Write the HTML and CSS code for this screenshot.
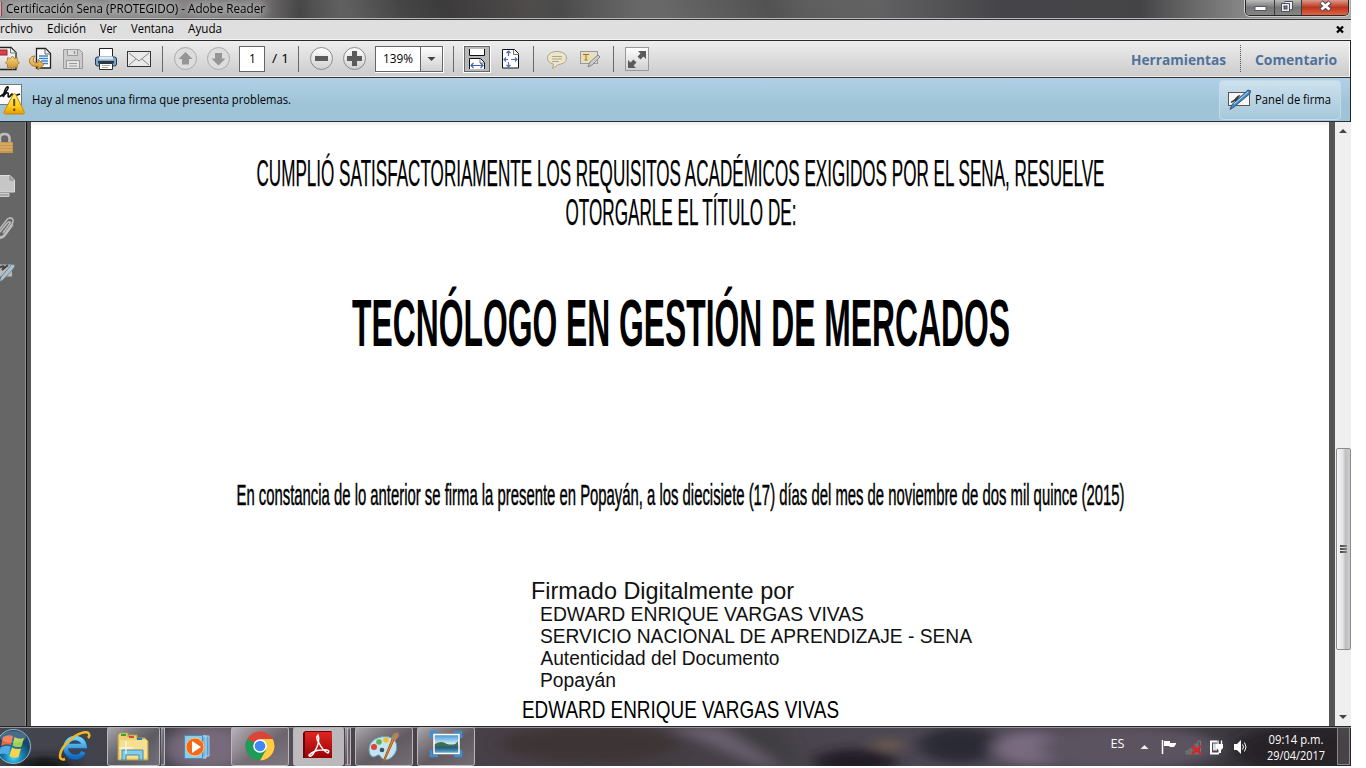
FILE: index.html
```
<!DOCTYPE html>
<html lang="es">
<head>
<meta charset="utf-8">
<title>Certificación Sena (PROTEGIDO) - Adobe Reader</title>
<link rel="stylesheet" href="styles.css">
</head>
<body>
<div class="screen">
  <header class="titlebar">
    <span class="app-edge"></span>
    <svg class="window-title" width="320" height="18"><text x="0" y="13" textLength="259" lengthAdjust="spacingAndGlyphs">Certificación Sena (PROTEGIDO) - Adobe Reader</text></svg>
    <div class="window-buttons">
      <span class="wbtn min"><svg width="28" height="15"><rect x="9" y="6.500" width="11" height="4" fill="#fff" stroke="#555865"/></svg></span>
      <span class="wbtn restore"><svg width="26" height="15"><path d="M9.500 1.500h8v8h-2M6.500 3.500h8v8h-8z" fill="#eee" stroke="#4b4e5c"/><rect x="9" y="6" width="3" height="3" fill="#777" stroke="#4b4e5c"/></svg></span>
      <span class="wbtn close"><svg width="47" height="15"><path d="M19 2l9 8M28 2l-9 8" stroke="#544a55" stroke-width="5"/><path d="M19.500 2.500l8 7M27.500 2.500l-8 7" stroke="#fff" stroke-width="2.800"/></svg></span>
    </div>
  </header>

  <nav class="menubar">
    <svg class="ui" width="1320" height="20">
      <text x="0" y="13" textLength="33" lengthAdjust="spacingAndGlyphs">rchivo</text>
      <text x="47" y="13" textLength="39" lengthAdjust="spacingAndGlyphs">Edición</text>
      <text x="100" y="13" textLength="17" lengthAdjust="spacingAndGlyphs">Ver</text>
      <text x="131" y="13" textLength="43" lengthAdjust="spacingAndGlyphs">Ventana</text>
      <text x="188" y="13" textLength="34" lengthAdjust="spacingAndGlyphs">Ayuda</text>
    </svg>
    <svg class="doc-close" width="9" height="9"><path d="M1 1.500l6 6M7 1.500l-6 6" stroke="#000" stroke-width="2.300"/></svg>
  </nav>

  <div class="toolbar">
    <svg width="660" height="36" viewBox="0 41 660 36">
      <defs>
        <linearGradient id="gold" x2="0" y2="1"><stop stop-color="#f8d984"/><stop offset="1" stop-color="#c98f2a"/></linearGradient>
        <linearGradient id="silver" x2="0" y2="1"><stop stop-color="#fff"/><stop offset="1" stop-color="#cfcfcf"/></linearGradient>
      </defs>
      <g>
        <path d="M-3 47.500H11l5 5V69.500H-3" fill="url(#silver)" stroke="#222" stroke-width="1.300"/>
        <path d="M10.500 48v5H16" fill="#eee" stroke="#777"/>
        <rect x="-2" y="50" width="9" height="5" fill="#d9424c" stroke="#9e1f28"/>
        <path d="M12.500 56l1.800 2.500 3-.8v3l2.200 2-2.200 2v3l-3-.7-1.800 2.500-2-2.500-3 .7v-3l-2-2 2-2v-3l3 .8z" fill="url(#gold)" stroke="#a97421" stroke-width=".8"/>
      </g>
      <g>
        <path d="M36.500 48.500h9l5 5v14.500h-14z" fill="#fff" stroke="#222" stroke-width="1.300"/>
        <path d="M45 49v5h5" fill="#eee" stroke="#666"/>
        <path d="M39 56h9M39 58.500h9M41 61h7M43 63.500h5" stroke="#3a83c9" stroke-width="1.500"/>
        <path d="M35 56c-5 0-7 5-4.500 8 2 2.500 5 2.500 7.500 2.500v3.500l6-5.500-6-5v3c-4 1-6.500-2-3-6.500z" fill="url(#gold)" stroke="#a97421"/>
      </g>
      <g fill="#ccc" stroke="#999">
        <path d="M63.500 49.500h16l3 3v16h-19z"/><path d="M67.500 49.500h10v6h-10z" fill="#ddd"/><path d="M74.500 51v3" stroke-width="1.500"/><path d="M66.500 60.500h13v8h-13z" fill="#e4e4e4"/><path d="M69 63.500h8M69 66h8"/>
      </g>
      <g>
        <path d="M99.500 48.500h13v10h-13z" fill="#fff" stroke="#222"/>
        <rect x="95.500" y="57" width="21" height="9" rx="2" fill="#80a6c8" stroke="#26384d"/>
        <path d="M99 56.500h14v3H99z" fill="#dce8f3"/><rect x="98" y="61" width="16" height="2.500" fill="#293948"/>
        <path d="M99.500 63.500h13v6h-13z" fill="#fff" stroke="#333"/><path d="M102 65.500h8M102 67.500h6" stroke="#aaa"/>
      </g>
      <g fill="#eaeaea" stroke="#333"><rect x="127.500" y="51.500" width="23" height="15"/><path d="M129 53l10 8 10-8M129 65l7-6M149 65l-7-6" fill="none" stroke="#888"/></g>
      <g class="seps"><path d="M162.500 46v26M298.500 46v26M453.500 46v26M533.500 46v26M613.500 46v26"/></g>
      <g fill="#ddd" stroke="#aaa"><circle cx="185.500" cy="58.500" r="11"/><circle cx="218.500" cy="58.500" r="11"/></g>
      <path d="M185.500 52l7 7h-3.500v5.500h-7V59h-3.500zM218.500 65.500l-7-7h3.500V53h7v5.500h3.500z" fill="#969696"/>
      <rect x="239.500" y="46.500" width="25" height="25" fill="#fff" stroke="#666"/>
      <g class="ui"><text x="249" y="63">1</text><text x="272" y="63" textLength="17" lengthAdjust="spacingAndGlyphs">/ 1</text></g>
      <g fill="url(#silver)" stroke="#8b8b8b"><circle cx="321.500" cy="58.500" r="11"/><circle cx="354.500" cy="58.500" r="11"/></g>
      <path d="M315 56h13v5h-13zM347 56h5v-5h5v5h5v5h-5v5h-5v-5h-5z" fill="#5b5b5b"/>
      <rect x="375" y="46" width="69" height="27" fill="#fff"/><rect x="375.500" y="46.500" width="67" height="25" fill="#fff" stroke="#666"/>
      <rect x="420.500" y="46.500" width="22" height="25" fill="url(#silver)" stroke="#666"/><path d="M427.500 57h8l-4 4z" fill="#444"/>
      <g class="ui"><text x="383" y="63" textLength="30" lengthAdjust="spacingAndGlyphs">139%</text></g>
      <rect x="463" y="45" width="28" height="28" fill="#fff"/><rect x="464.500" y="46.500" width="25" height="25" fill="#b9b9b9" stroke="#666"/>
      <path d="M469.500 49v6.500h15V49" fill="#fff" stroke="#111"/><path d="M469.500 69V58.500h11l4 4V69" fill="#fff" stroke="#111"/><path d="M480 59v4h4" fill="none" stroke="#777"/>
      <path d="M471 65.500h12M473.500 63l-2.500 2.500 2.500 2.500M480.500 63l2.500 2.500-2.500 2.500" fill="none" stroke="#3e62b3" stroke-width="1.200"/>
      <path d="M502.500 49.500h12l4 4v14.500h-16z" fill="#fff" stroke="#111"/><path d="M513.500 50v4.500h5" fill="#eee" stroke="#777"/>
      <path d="M508.500 51v5M508.500 62v5M504 59.500h4M511 59.500h6M506.500 53l2-2 2 2M506.500 65l2 2 2-2M506 57.500l-2 2 2 2M515 57.500l2 2-2 2" fill="none" stroke="#4e70bb" stroke-width="1.200"/>
      <path d="M557 51.500c6 0 9.500 3 9.500 6.500s-3 6-8 6.500l-6 4 1-4.500c-4-1-6-3-6-6 0-4 4-6.500 9.500-6.500z" fill="#eee4c7" stroke="#aaa593"/><path d="M552 56.500h10M552 59h10M552 61.500h7" stroke="#aaa593"/>
      <rect x="580.500" y="51.500" width="17" height="12" fill="#e5dfc8" stroke="#999"/><path d="M582 53h8v8h-8z" fill="#f2df92"/><path d="M583 54.500h6M586 54.500V60M584.500 60h3" stroke="#777"/><path d="M588 67l2-5 8-7 2 2-8 8z" fill="#ccc" stroke="#888"/>
      <rect x="625.500" y="47.500" width="23" height="23" fill="url(#silver)" stroke="#999"/><path d="M638 51h8v8l-2.500-2.500-3 3-3-3 3-3zM628 60l2.500 2.500 3-3 3 3-3 3L636 68h-8z" fill="#5b5b5b"/>
    </svg>
    <div class="side-tabs">
      <svg width="95" height="36" class="tab"><text x="0" y="24" textLength="95" lengthAdjust="spacingAndGlyphs">Herramientas</text></svg>
      <span class="dots"></span>
      <svg width="82" height="36" class="tab"><text x="0" y="24" textLength="82" lengthAdjust="spacingAndGlyphs">Comentario</text></svg>
    </div>
  </div>

  <div class="message">
    <svg class="ui" width="400" height="42" viewBox="0 78 400 42">
      <defs><linearGradient id="warn" x2="0" y2="1"><stop stop-color="#fff184"/><stop offset=".6" stop-color="#ffd21d"/><stop offset="1" stop-color="#e59a00"/></linearGradient></defs>
      <rect x="-3" y="84.500" width="24.500" height="20" fill="#fff" stroke="#777"/>
      <path d="M0 96.500c5-3 9-8 8-9.500-2-1-4 5-5 10 2-3 4-5 5-4 1 1-1 4 1 4 2-1 2-3 3-3 1 3 3 2 8 0" fill="none" stroke="#111" stroke-width="1.600"/>
      <path d="M13.500 94q1-1 2 0l9 18.500q0 1.500-2 1.500H5.500q-2 0-1.500-2z" fill="url(#warn)" stroke="#c88908"/><path d="M14.200 99v7M14.200 108.500v2.500" stroke="#6c4b00" stroke-width="2"/>
      <text x="32" y="104" textLength="259" lengthAdjust="spacingAndGlyphs">Hay al menos una firma que presenta problemas.</text>
    </svg>
    <div class="panel-btn">
      <svg width="24" height="24"><rect x=".5" y="4.500" width="21" height="13" fill="#f7f7f7" stroke="#555"/><path d="M3 14c4 0 6-6 8-6l-4 5" fill="none" stroke="#333" stroke-width="1.500"/><path d="M2 21.500l2-5L20 2l3 1-1.500 3L6 19z" fill="#438bc5" stroke="#345878"/><path d="M6 16L20 4" stroke="#b8dcf4"/></svg>
      <svg class="ui" width="77" height="24"><text x="0" y="16" textLength="76" lengthAdjust="spacingAndGlyphs">Panel de firma</text></svg>
    </div>
  </div>

  <main class="workspace">
    <aside class="rail">
      <svg width="25" height="180" viewBox="0 122 25 180">
        <path d="M0 142v-4q0-4 4.500-4t5 4v5" fill="none" stroke="#bdbdbd" stroke-width="2.500"/><rect x="-2" y="142" width="15" height="11" fill="#c6964d"/><path d="M0 144h12M0 147h12M0 150h12" stroke="#e0bd7c"/>
        <path d="M-1 193.500h10v3H-1z" fill="#aaa" stroke="#ccc"/><path d="M-1 175.500H10l4.500 4.500v12H-1z" fill="#c6c6c6" stroke="#ddd"/><path d="M10 176v4h4" fill="#aaa" stroke="#888"/>
        <path d="M-1 230L7 219.500q3-3 5.500-.5 1.500 2-.5 5l-8 11q-3 3-5 1M-1 238.500q4 0 6-3l8-11M0 232l7-9q2-2 3.500-.5L3 233" fill="none" stroke="#bcbcbc" stroke-width="1.500"/>
        <path d="M-1 264.500H12v12H-1z" fill="#bbb"/><path d="M-1 268c5-3 6-2 3 2l6-5" fill="none" stroke="#444" stroke-width="2"/><path d="M-1 282l2-5L12 264l3 1-1 3L3 280z" fill="#abc0cf" stroke="#60717d" stroke-width=".8"/>
      </svg>
    </aside>
    <article class="page">
      <svg width="1298" height="130"><g class="regular"><text x="225.500" y="64" textLength="848" lengthAdjust="spacingAndGlyphs">CUMPLIÓ SATISFACTORIAMENTE LOS REQUISITOS ACADÉMICOS EXIGIDOS POR EL SENA, RESUELVE</text><text x="534.500" y="103" textLength="231" lengthAdjust="spacingAndGlyphs">OTORGARLE EL TÍTULO DE:</text></g></svg>
      <svg width="1298" height="150"><text class="degree" x="321" y="94" textLength="658" lengthAdjust="spacingAndGlyphs">TECNÓLOGO EN GESTIÓN DE MERCADOS</text></svg>
      <svg width="1298" height="150"><text class="record" x="205.500" y="103" textLength="888" lengthAdjust="spacingAndGlyphs">En constancia de lo anterior se firma la presente en Popayán, a los diecisiete (17) días del mes de noviembre de dos mil quince (2015)</text></svg>
      <svg width="1298" height="174">
        <text class="sign-lg" x="500" y="47" textLength="263" lengthAdjust="spacingAndGlyphs">Firmado Digitalmente por</text>
        <g class="sign"><text x="509" y="69" textLength="324" lengthAdjust="spacingAndGlyphs">EDWARD ENRIQUE VARGAS VIVAS</text><text x="509" y="91" textLength="432" lengthAdjust="spacingAndGlyphs">SERVICIO NACIONAL DE APRENDIZAJE - SENA</text><text x="509.500" y="113" textLength="239" lengthAdjust="spacingAndGlyphs">Autenticidad del Documento</text><text x="509" y="135" textLength="76" lengthAdjust="spacingAndGlyphs">Popayán</text></g>
        <text class="sign-lg dark" x="491" y="166" textLength="317" lengthAdjust="spacingAndGlyphs">EDWARD ENRIQUE VARGAS VIVAS</text>
      </svg>
    </article>
    <div class="scrollbar">
      <svg width="16" height="16"><path d="M4 11l4-4 4 4z" fill="#444"/></svg>
      <div class="thumb"><i></i><i></i><i></i></div>
      <svg width="16" height="16"><path d="M4 5h8l-4 4z" fill="#444"/></svg>
    </div>
  </main>

  <footer class="taskbar">
    <svg width="1351" height="40" viewBox="0 726 1351 40">
      <defs>
        <radialGradient id="orb" cy=".8"><stop stop-color="#4fe0ff"/><stop offset=".5" stop-color="#1784b5"/><stop offset="1" stop-color="#1c4668"/></radialGradient>
        <linearGradient id="btn" x2="1" y2="1"><stop stop-color="#fff" stop-opacity=".55"/><stop offset=".55" stop-color="#aaa" stop-opacity=".25"/><stop offset="1" stop-color="#ddd" stop-opacity=".3"/></linearGradient>
        <linearGradient id="red" x2="0" y2="1"><stop stop-color="#e12520"/><stop offset="1" stop-color="#990306"/></linearGradient>
        <linearGradient id="sky" x2="0" y2="1"><stop stop-color="#3c93d5"/><stop offset=".5" stop-color="#d5edf8"/><stop offset=".55" stop-color="#3f7150"/><stop offset=".7" stop-color="#235d7e"/><stop offset="1" stop-color="#71bad8"/></linearGradient>
        <linearGradient id="ieb" x2="0" y2="1"><stop stop-color="#76d3fa"/><stop offset="1" stop-color="#136ac0"/></linearGradient>
        <filter id="soft" x="-50%" y="-50%" width="200%" height="200%"><feGaussianBlur stdDeviation="9 5"/></filter>
      </defs>
      <g filter="url(#soft)">
        <ellipse cx="45" cy="766" rx="28" ry="10" fill="#181719"/><ellipse cx="205" cy="748" rx="40" ry="20" fill="#776b7c"/>
        <ellipse cx="590" cy="744" rx="90" ry="18" fill="#3d3436"/><path d="M665 726l60 0 80 40h-45z" fill="#675f6d"/><path d="M720 726h60l20 40h-20z" fill="#403c42"/><ellipse cx="855" cy="762" rx="42" ry="13" fill="#211f26"/><ellipse cx="888" cy="745" rx="12" ry="5" fill="#7b604f"/>
        <ellipse cx="960" cy="745" rx="42" ry="18" fill="#2c2a34"/><ellipse cx="1030" cy="748" rx="37" ry="16" fill="#796b80"/><ellipse cx="1130" cy="748" rx="90" ry="20" fill="#5c5260"/><ellipse cx="1300" cy="750" rx="65" ry="24" fill="#252428"/>
      </g>
      <path d="M0 726.500h1351" stroke="#24272a"/><path d="M0 727.500h1351" stroke="#92949a"/>
      <circle cx="13.500" cy="746.500" r="17" fill="url(#orb)" stroke="#8fb9ce"/>
      <path d="M3 737q5-3 10-1l-2 9q-5-2-10 1z" fill="#ed653b"/><path d="M14.500 737q5 3 9.500 1l-2.500 8.500q-5 1.500-9-1z" fill="#a2ce4d"/><path d="M.5 747.500q5-3 10-1l-2 8.500q-5-3-10 0z" fill="#51a9e6"/><path d="M12 747.500q4 2.500 9 1l-2.500 8.500q-5 1.500-9-1z" fill="#ffd348"/>
      <ellipse cx="13" cy="737" rx="13" ry="6" fill="#fff" opacity=".2"/>
      <path d="M83.500 752a9.500 9.500 0 1 1 1-6H67" fill="none" stroke="#154f8c" stroke-width="6"/><path d="M83.500 752a9.500 9.500 0 1 1 1-6H67" fill="none" stroke="url(#ieb)" stroke-width="4.500"/>
      <path d="M65 759c-8 3-6-9 3-17 8-9 20-12 21-8 1 2-1 4-1 4" fill="none" stroke="#efb923" stroke-width="2.500"/>
      <g fill="url(#btn)" stroke="#b9b7bd"><rect x="107.500" y="727.500" width="52" height="38" rx="2"/><path d="M161 728h3.500v37H161" /><rect x="231.500" y="727.500" width="57" height="38" rx="2"/><rect x="293.500" y="727.500" width="50" height="38" rx="2" fill="#fff" fill-opacity=".62"/><path d="M345 728h2.500v37H345M348 728h2.500v37H348" /><rect x="355.500" y="727.500" width="57" height="38" rx="2"/><rect x="417.500" y="727.500" width="57" height="38" rx="2"/></g>
      <path d="M118 735l2-2h8v4l1-2h8v4l1-1h7l3 3v19h-30z" fill="#eed174" stroke="#b69745"/><path d="M121 734h5v2h-5z" fill="#2ca53b"/><path d="M129 736h5v2h-5z" fill="#d64b32"/><path d="M137 738h5v2h-5z" fill="#287dbd"/><path d="M120 740h27v18h-27z" fill="#f5df91"/><path d="M122 760v-10h21v10h-4v-5h-13v5z" fill="#83cdea" stroke="#4689ad"/><path d="M126 741v13M119 748h14" stroke="#fff"/>
      <path d="M190 736h19v20h-19z" fill="#5e9fc9" stroke="#a1d0e9"/><path d="M187 736h19v22h-19z" fill="#75b7dc" stroke="#b7ddef"/><path d="M184.500 735.500h18v23h-18z" fill="#8dcceb" stroke="#468bb7"/><circle cx="195" cy="747" r="9" fill="#f16a19" stroke="#ffc289"/><path d="M192 741l9 6-9 6z" fill="#fff"/>
      <g><circle cx="260" cy="746" r="14.500" fill="#db4437"/><path d="M260 746L247.500 738.700A14.500 14.500 0 0 0 260 760.500l6.500-11z" fill="#1b9d59"/><path d="M260 739h12.700A14.500 14.500 0 0 1 260 760.500l6.300-11z" fill="#ffcd41"/><circle cx="260" cy="746" r="6.800" fill="#fff"/><circle cx="260" cy="746" r="5.300" fill="#4285f4"/></g>
      <path d="M303 733l2-2h26l1 1v26H303z" fill="#690406"/><path d="M305 732h27v26h-27z" fill="url(#red)"/><path d="M318 735c-2 2-2 4 1 8 3 6 6 9 9 10 2-2 0-4-6-3-5 0-10 2-13 5 0 2 3 2 6-4 3-5 5-12 3-16z" fill="none" stroke="#fff" stroke-width="1.500"/>
      <path d="M369 749c0-8 9-14 20-12 9 2 10 13 4 19-5 5-10 5-13 0-1-3-4 1-7 1-3-1-4-4-4-8z" fill="#c5e4f1" stroke="#629dbb"/><circle cx="374" cy="747" r="3" fill="#df4139"/><circle cx="379" cy="742" r="2.800" fill="#61b24b"/><circle cx="386" cy="740" r="2.800" fill="#f0bd30"/><circle cx="382" cy="750" r="2.300" fill="#345269"/><path d="M384 759q-2 3 0 3l10-22-2-1z" fill="#e88c27" stroke="#a85a14"/><path d="M391 739l2-5 5-2 1 4-4 5z" fill="#ad8558"/>
      <path d="M431 738v-6h7M454 732h7v6M431 750v6h7M454 756h7v-6" fill="none" stroke="#3a8fd5" stroke-width="2.500"/><path d="M434 734.500h25v19h-25z" fill="url(#sky)" stroke="#fff" stroke-width="1.500"/><path d="M435 744q6-4 12 0t11-3v5h-23z" fill="#3e6f50"/>
      <g class="tray"><text x="1110.500" y="748" textLength="14" lengthAdjust="spacingAndGlyphs">ES</text><text x="1268.500" y="743.500" textLength="55" lengthAdjust="spacingAndGlyphs">09:14 p.m.</text><text x="1267" y="760" textLength="58" lengthAdjust="spacingAndGlyphs">29/04/2017</text></g>
      <path d="M1140.500 749h8l-4-4z" fill="#eee"/>
      <path d="M1162.500 740v14" stroke="#fff" stroke-width="1.500"/><path d="M1164 741h6v2h6v1l-2 3h-4l-1-1h-5z" fill="#fff"/>
      <path d="M1186 751h2v3h-2zM1189 749h2v5h-2zM1192 747h2v7h-2zM1195 744h2v10h-2zM1198 741h2.500v13h-2.500z" fill="#555" stroke="#888" stroke-width=".7"/><path d="M1192 746l9 8M1201 746l-9 8" stroke="#f01818" stroke-width="2"/>
      <path d="M1217 741.500h-6v12h8" fill="none" stroke="#fff" stroke-width="2"/><path d="M1213 743.500h4v7h-4z" fill="#ddd"/><path d="M1216 744h7v4l-2 2v3h-2.500v-3l-2.500-2z" fill="#fff"/><path d="M1218 740.500v4M1221.500 740.500v4" stroke="#fff" stroke-width="1.300"/>
      <path d="M1234 744h3l4-4v14l-4-4h-3z" fill="#fff"/><path d="M1242.500 744.500q2 2.500 0 5M1244.500 742.500q3 4.500 0 9" fill="none" stroke="#fff"/>
      <rect x="1337.500" y="727.500" width="12" height="37" fill="#fff" fill-opacity=".15" stroke="#888"/>
    </svg>
  </footer>
</div>
</body>
</html>
```
FILE: styles.css
```
* { box-sizing: border-box; }
body { margin: 0; width: 1366px; height: 768px; background: #fff; overflow: hidden; font-family: "Open Sans", "Noto Sans", sans-serif; }
svg { display: block; }
.screen { width: 1351px; height: 766px; display: grid; grid-template-rows: 20px 21px 37px 44px 604px 40px; }
.ui { overflow: visible; }
.ui text { font: 12px "Open Sans", "Noto Sans", sans-serif; fill: #000; }

.titlebar { display: flex; background: linear-gradient(65deg, transparent 22%, #6668 26%, #3338 33%, transparent 40%, #6666 49%, #2226 57%, transparent 65%), linear-gradient(90deg, #8d8b8b 0, #757373 260px, #464545 300px, #5a5a5a 340px, #434141 400px, #514d4d 530px, #484848 560px, #686868 640px, #747474 800px, #454549 1000px, #444447 1140px, #606060 1180px, #858585 1240px, #a9a9a9 1351px); border-bottom: 1px solid #34343a; box-shadow: inset 0 -1px #b8b8b8; }
.app-edge { width: 2px; height: 14px; margin-top: 2px; border-right: 1px solid #8e3b42; background: #caa; }
.window-title { margin-left: 4px; overflow: visible; filter: drop-shadow(0 0 5px #ddd) drop-shadow(0 0 4px #ccc); }
.window-title text { font: 12px "Open Sans", "Noto Sans", sans-serif; fill: #000; }
.window-buttons { display: flex; width: 104px; height: 16px; margin: 0 2px 0 auto; border: 1px solid #282828; border-top: 0; border-radius: 0 0 5px 5px; box-shadow: 0 0 0 1px #ccc; overflow: hidden; }
.wbtn { border-right: 1px solid #3b3b3b; background: linear-gradient(#bbb, #777 50%, #858585); }
.min { width: 29px; }
.restore { width: 27px; }
.close { width: 47px; border: 0; background: linear-gradient(#d99a8b, #bd351d 50%, #dc6545); }

.menubar { display: flex; justify-content: space-between; background: #dfdfdf; border-bottom: 1px solid #29292d; box-shadow: inset 0 -1px #f5f5f5; }
.doc-close { margin: 5px 6px 0 0; }

.toolbar { display: flex; justify-content: space-between; background: linear-gradient(#eee, #cacaca); border-bottom: 1px solid #333; border-right: 1px solid #222; box-shadow: inset 0 -1px #eee, inset -1px 0 #fff; }
.seps { stroke: #686868; }
.side-tabs { display: flex; margin-right: 13px; }
.tab { overflow: visible; }
.tab text { font: 700 14px "Open Sans", "Noto Sans", sans-serif; fill: #4e729b; }
.dots { width: 1px; height: 27px; margin: 4px 14px 0; background: repeating-linear-gradient(#555 0 1px, transparent 1px 2px); }

.message { display: flex; justify-content: space-between; background: linear-gradient(#b2d0e7, #9fc4d8 60%, #9fc4d7); border-bottom: 1px solid #283038; border-right: 1px solid #222; }
.panel-btn { display: flex; align-items: center; gap: 4px; width: 122px; height: 40px; margin: 2px 9px 0 0; padding: 0 8px; border: 1px solid #c4dce9; border-radius: 4px; background: linear-gradient(#cee1ee, #a5c8da); }

.workspace { display: grid; grid-template-columns: 31px 1298px 6px 16px; background: #555553; overflow: hidden; }
.rail { width: 27px; background: #666; border-right: 1px solid #111; box-shadow: inset -1px 0 #8c8c8c; }
.page { background: linear-gradient(#eeeeeb, #fff 5px); }
.regular text { font: 36px "Liberation Sans", Arial, sans-serif; stroke: #000; stroke-width: .25px; }
.degree { font: bold 66.500px "Liberation Sans", Arial, sans-serif; }
.record { font: 30px "Liberation Sans", Arial, sans-serif; stroke: #000; stroke-width: .5px; }
.sign text { font: 19.500px "Liberation Sans", Arial, sans-serif; fill: #111; }
.sign-lg { font: 24px "Liberation Sans", Arial, sans-serif; fill: #111; }
.dark { fill: #000; }

.scrollbar { display: flex; flex-direction: column; background: #efefef; grid-column: 4; }
.thumb { display: flex; flex-direction: column; align-items: center; justify-content: center; gap: 1px; width: 15px; height: 202px; margin: auto 0 60px 1px; border: 1px solid #8b8b8b; border-radius: 2px; background: linear-gradient(90deg, #f7f7f7, #e3e3e4 45%, #bfc0c4 65%, #ccc); flex: none; }
.thumb i { width: 7px; height: 2px; background: linear-gradient(90deg, #444, #888); }

.taskbar { background: linear-gradient(90deg, #454650, #41404a 160px, #675d6a 205px, #4b424b 350px, #443d43 650px, #4c4853 900px, #554c5a 1100px, #37353a 1240px, #29292c); overflow: hidden; }
.tray text { font: 12px "Open Sans", "Noto Sans", sans-serif; fill: #fff; }
```
